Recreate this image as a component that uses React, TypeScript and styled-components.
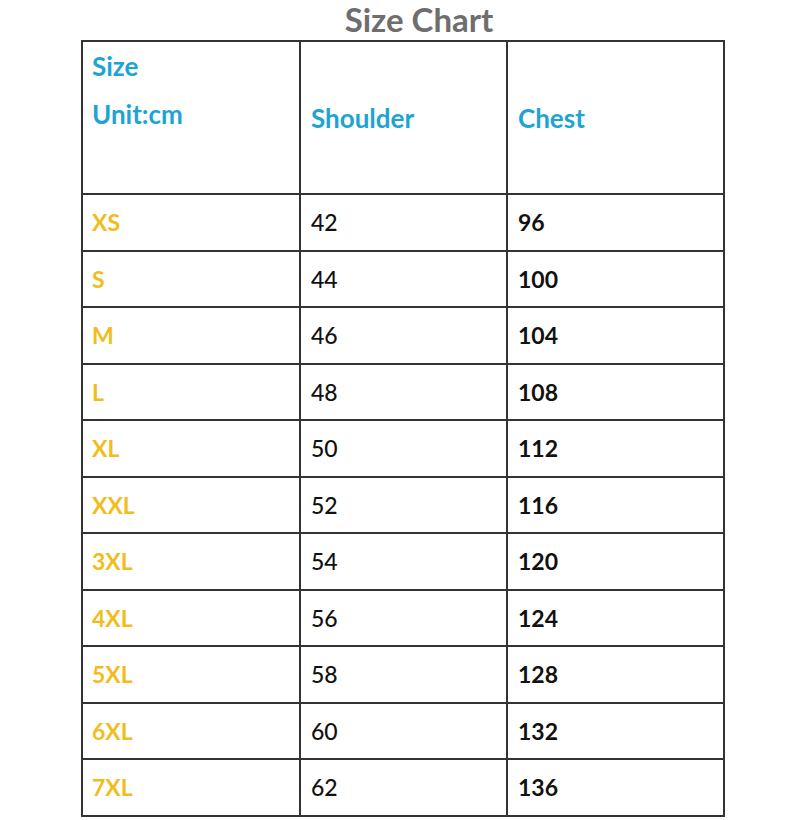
import { createGlobalStyle } from 'styled-components';
import styled from 'styled-components';

const GlobalStyle = createGlobalStyle`
	body {
		margin: 0;
		background: #fff;
		font-family: Lato, 'Open Sans', sans-serif;
	}
`;

const Page = styled.div`
	width: 800px;
	height: 820px;
	display: flex;
	flex-direction: column;
	align-items: flex-start;
`;

const Title = styled.h1`
	align-self: stretch;
	margin: 0;
	padding-left: 38px;
	height: 40px;
	line-height: 38px;
	text-align: center;
	font-size: 33px;
	font-weight: 700;
	color: #6e6e6e;
`;

const Table = styled.table`
	margin-left: 81px;
	width: 642px;
	border-collapse: collapse;
	table-layout: fixed;
	font-size: 23px;
`;

const HeadCell = styled.th<{ $stacked?: boolean }>`
	height: 151px;
	padding: ${({ $stacked }) => ($stacked ? '0 0 0 9px' : '0 0 0 10px')};
	border: 2px solid #333;
	text-align: left;
	vertical-align: ${({ $stacked }) => ($stacked ? 'top' : 'middle')};
	line-height: ${({ $stacked }) => ($stacked ? '48px' : '30px')};
	font-size: 26px;
	font-weight: 700;
	color: #1ea4d2;
`;

const Cell = styled.td<{ $tone: 'size' | 'plain' | 'bold' }>`
	height: 54.5px;
	padding: 0 0 0 ${({ $tone }) => ($tone === 'size' ? '9px' : '10px')};
	border: 2px solid #333;
	line-height: 30px;
	font-weight: ${({ $tone }) => ($tone === 'plain' ? 500 : 700)};
	color: ${({ $tone }) => ($tone === 'size' ? '#f1bd1c' : '#111')};
`;

const rows = [
	['XS', 42, 96],
	['S', 44, 100],
	['M', 46, 104],
	['L', 48, 108],
	['XL', 50, 112],
	['XXL', 52, 116],
	['3XL', 54, 120],
	['4XL', 56, 124],
	['5XL', 58, 128],
	['6XL', 60, 132],
	['7XL', 62, 136],
] as const;

export default function App() {
	return (
		<Page>
			<GlobalStyle />
			<Title>Size Chart</Title>
			<Table>
				<colgroup>
					<col style={{ width: 218 }} />
					<col style={{ width: 207 }} />
					<col style={{ width: 217 }} />
				</colgroup>
				<thead>
					<tr>
						<HeadCell $stacked>
							Size
							<br />
							Unit:cm
						</HeadCell>
						<HeadCell>Shoulder</HeadCell>
						<HeadCell>Chest</HeadCell>
					</tr>
				</thead>
				<tbody>
					{rows.map(([size, shoulder, chest]) => (
						<tr key={size}>
							<Cell $tone="size">{size}</Cell>
							<Cell $tone="plain">{shoulder}</Cell>
							<Cell $tone="bold">{chest}</Cell>
						</tr>
					))}
				</tbody>
			</Table>
		</Page>
	);
}
